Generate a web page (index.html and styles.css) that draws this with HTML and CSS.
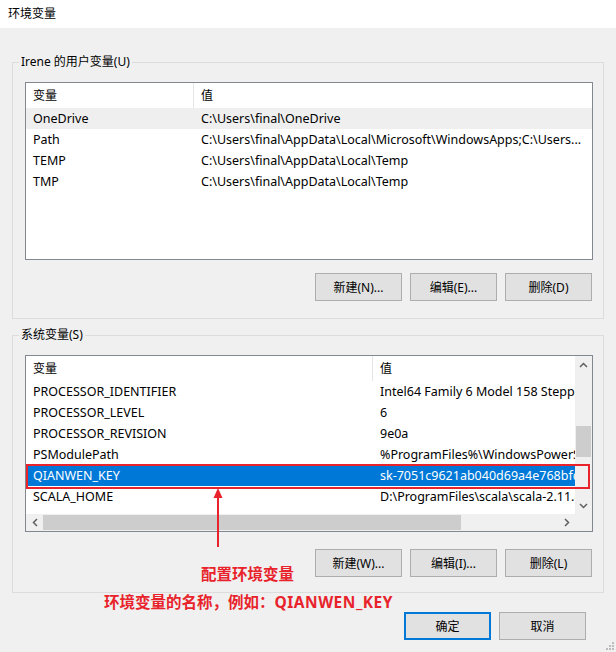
FILE: index.html
```html
<!DOCTYPE html>
<html lang="zh-CN">
<head>
    <meta charset="UTF-8">
    <title>环境变量</title>
    <link rel="stylesheet" href="styles.css">
</head>
<body>
    <div class="window">
        <div class="titlebar">环境变量</div>

        <div class="client">
            <fieldset class="group">
                <legend>Irene 的用户变量(U)</legend>
                <div class="listview user-list">
                    <div class="lv-row lv-head">
                        <span class="c1">变量</span>
                        <span class="c2">值</span>
                    </div>
                    <div class="lv-row hot">
                        <span class="c1">OneDrive</span>
                        <span class="c2">C:\Users\final\OneDrive</span>
                    </div>
                    <div class="lv-row">
                        <span class="c1">Path</span>
                        <span class="c2">C:\Users\final\AppData\Local\Microsoft\WindowsApps;C:\Users...</span>
                    </div>
                    <div class="lv-row">
                        <span class="c1">TEMP</span>
                        <span class="c2">C:\Users\final\AppData\Local\Temp</span>
                    </div>
                    <div class="lv-row">
                        <span class="c1">TMP</span>
                        <span class="c2">C:\Users\final\AppData\Local\Temp</span>
                    </div>
                </div>
                <div class="btn-row">
                    <button class="btn">新建(N)...</button>
                    <button class="btn">编辑(E)...</button>
                    <button class="btn">删除(D)</button>
                </div>
            </fieldset>

            <fieldset class="group sys-group">
                <legend>系统变量(S)</legend>
                <div class="listview sys-list">
                    <div class="lv-viewport">
                        <div class="lv-row lv-head">
                            <span class="c1">变量</span>
                            <span class="c2">值</span>
                        </div>
                        <div class="lv-row">
                            <span class="c1">PROCESSOR_IDENTIFIER</span>
                            <span class="c2">Intel64 Family 6 Model 158 Stepping 10, GenuineIntel</span>
                        </div>
                        <div class="lv-row">
                            <span class="c1">PROCESSOR_LEVEL</span>
                            <span class="c2">6</span>
                        </div>
                        <div class="lv-row">
                            <span class="c1">PROCESSOR_REVISION</span>
                            <span class="c2">9e0a</span>
                        </div>
                        <div class="lv-row">
                            <span class="c1">PSModulePath</span>
                            <span class="c2">%ProgramFiles%\WindowsPowerShell\Modules;C:\Windows\system32</span>
                        </div>
                        <div class="lv-row selected">
                            <span class="c1">QIANWEN_KEY</span>
                            <span class="c2">sk-7051c9621ab040d69a4e768bfd2c35a1</span>
                        </div>
                        <div class="lv-row">
                            <span class="c1">SCALA_HOME</span>
                            <span class="c2">D:\ProgramFiles\scala\scala-2.11.8</span>
                        </div>
                    </div>
                    <div class="vscroll">
                        <div class="sb-btn">
                            <svg width="9" height="6" viewBox="0 0 9 6"><polyline points="1,5 4.5,1.5 8,5" fill="none" stroke="#606060" stroke-width="1.5"/></svg>
                        </div>
                        <div class="sb-track v-track"><div class="thumb v-thumb"></div></div>
                        <div class="sb-btn">
                            <svg width="9" height="6" viewBox="0 0 9 6"><polyline points="1,1 4.5,4.5 8,1" fill="none" stroke="#606060" stroke-width="1.5"/></svg>
                        </div>
                    </div>
                    <div class="hscroll">
                        <div class="sb-btn">
                            <svg width="6" height="9" viewBox="0 0 6 9"><polyline points="5,1 1.5,4.5 5,8" fill="none" stroke="#606060" stroke-width="1.5"/></svg>
                        </div>
                        <div class="sb-track h-track"><div class="thumb h-thumb"></div></div>
                        <div class="sb-btn">
                            <svg width="6" height="9" viewBox="0 0 6 9"><polyline points="1,1 4.5,4.5 1,8" fill="none" stroke="#606060" stroke-width="1.5"/></svg>
                        </div>
                    </div>
                    <div class="corner"></div>
                </div>
                <div class="btn-row">
                    <button class="btn">新建(W)...</button>
                    <button class="btn">编辑(I)...</button>
                    <button class="btn">删除(L)</button>
                </div>
            </fieldset>

            <div class="dialog-buttons">
                <button class="btn default">确定</button>
                <button class="btn">取消</button>
            </div>
        </div>

        <!-- annotations drawn on top of the screenshot -->
        <div class="mark-box"></div>
        <svg class="mark-arrow" width="16" height="64" viewBox="0 0 16 64">
            <polygon points="8,2 3.5,12 12.5,12" fill="#e8232b"/>
            <line x1="8" y1="10" x2="8" y2="61" stroke="#e8232b" stroke-width="2"/>
        </svg>
        <div class="note note-1">配置环境变量</div>
        <div class="note note-2">环境变量的名称，例如：<span class="key">QIANWEN_KEY</span></div>

        <svg class="grip" width="8" height="8" viewBox="0 0 8 8">
            <rect x="6" y="0" width="2" height="2" fill="#bcbcbc"/>
            <rect x="3" y="3" width="2" height="2" fill="#bcbcbc"/>
            <rect x="6" y="3" width="2" height="2" fill="#bcbcbc"/>
            <rect x="0" y="6" width="2" height="2" fill="#bcbcbc"/>
            <rect x="3" y="6" width="2" height="2" fill="#bcbcbc"/>
            <rect x="6" y="6" width="2" height="2" fill="#bcbcbc"/>
        </svg>
    </div>
</body>
</html>
```

FILE: styles.css
```css
* {
    box-sizing: border-box;
}

body {
    margin: 0;
    background: #f0f0f0;
    font-family: "Noto Sans", "Noto Sans CJK SC", sans-serif;
    font-size: 12px;
    color: #000;
}

.window {
    position: relative;
    width: 616px;
    height: 652px;
    overflow: hidden;
}

.titlebar {
    height: 28px;
    background: #fff;
    padding-left: 8px;
    line-height: 27px;
}

.client {
    padding-top: 26px;
}

/* group boxes */
.group {
    margin: 0 12px;
    padding: 12px 10px 17px 12px;
    border: 1px solid #dcdcdc;
    min-width: 0;
}

.group legend {
    margin-left: -6px;
    padding: 0 2px;
    line-height: 16px;
}

.sys-group {
    margin-top: 8px;
    padding-bottom: 15px;
}

/* list views */
.listview {
    background: #fff;
    border: 1px solid #828790;
    height: 178px;
    overflow: hidden;
}

.lv-row {
    display: flex;
    height: 21px;
    line-height: 21px;
    white-space: nowrap;
    font-size: 12.5px;
}

.lv-head {
    height: 25px;
    line-height: 25px;
    font-size: 12px;
}

.lv-row .c1 {
    flex: none;
    padding-left: 7px;
    overflow: hidden;
}

.lv-row .c2 {
    flex: none;
    padding-left: 7px;
}

.lv-head .c1 {
    border-right: 1px solid #e5e5e5;
}

.user-list .c1 {
    width: 168px;
}

.user-list .c2 {
    width: 396px;
    overflow: hidden;
}

.lv-row.hot {
    background: #efefef;
}

.sys-list {
    height: 177px;
    display: grid;
    grid-template-columns: 1fr 17px;
    grid-template-rows: 1fr 17px;
}

.lv-viewport {
    overflow: hidden;
}

.sys-list .c1 {
    width: 347px;
}

.lv-row.selected {
    background: #0078d7;
    color: #fff;
}

.lv-row.selected .c1 {
    border-left: 1px dotted #9fd0ff;
    padding-left: 6px;
}

/* scroll bars */
.vscroll {
    background: #f0f0f0;
    display: flex;
    flex-direction: column;
}

.hscroll {
    background: #f0f0f0;
    display: flex;
}

.sb-btn {
    width: 17px;
    height: 17px;
    flex: none;
    display: flex;
    align-items: center;
    justify-content: center;
}

.sb-track {
    flex: 1;
}

.thumb {
    background: #cdcdcd;
}

.v-thumb {
    margin: 53px 1px 0;
    height: 31px;
}

.h-thumb {
    margin: 1px 0;
    width: 418px;
    height: 15px;
}

.corner {
    background: #f0f0f0;
}

/* buttons */
.btn-row {
    display: flex;
    justify-content: flex-end;
    gap: 8px;
    padding-right: 1px;
    margin-top: 13px;
}

.sys-group .btn-row {
    margin-top: 17px;
}

.btn {
    width: 87px;
    height: 28px;
    background: #e1e1e1;
    border: 1px solid #adadad;
    font-family: inherit;
    font-size: 12px;
    color: #000;
    padding: 0;
}

.btn.default {
    border: 2px solid #0078d7;
}

.dialog-buttons {
    display: flex;
    justify-content: flex-end;
    gap: 8px;
    margin-top: 19px;
    padding-right: 30px;
}

/* red annotations */
.mark-box {
    position: absolute;
    left: 26px;
    top: 464px;
    width: 564px;
    height: 25px;
    border: 2px solid #e8232b;
}

.mark-arrow {
    position: absolute;
    left: 210px;
    top: 486px;
}

.note {
    position: absolute;
    color: #e8232b;
    font-weight: bold;
    font-size: 15.5px;
    line-height: 20px;
    white-space: nowrap;
}

.note .key {
    letter-spacing: 0.5px;
}

.note-1 {
    left: 201px;
    top: 564px;
}

.note-2 {
    left: 104px;
    top: 592px;
}

.grip {
    position: absolute;
    right: 2px;
    bottom: 2px;
}
```
